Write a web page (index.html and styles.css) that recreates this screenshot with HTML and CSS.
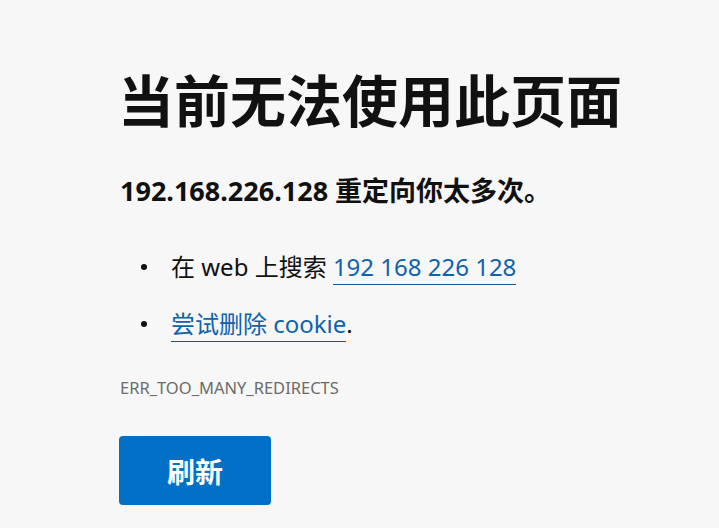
FILE: index.html
```html
<!DOCTYPE html>
<html lang="zh-CN">
<head>
<meta charset="UTF-8">
<title>192.168.226.128</title>
<link rel="stylesheet" href="styles.css">
</head>
<body>
<div class="page">
    <h1 class="title">当前无法使用此页面</h1>
    <p class="summary">192.168.226.128 重定向你太多次。</p>

    <ul class="tips">
        <li>在 web 上搜索 <a href="#">192 168 226 128</a></li>
        <li><a href="#">尝试删除 cookie</a>.</li>
    </ul>

    <div class="error-code">ERR_TOO_MANY_REDIRECTS</div>

    <button class="reload-btn">刷新</button>
</div>
</body>
</html>
```

FILE: styles.css
```css
html, body {
    margin: 0;
    background: #f7f7f7;
}
body {
    font-family: "Noto Sans", "Noto Sans CJK SC", sans-serif;
    color: #111;
}
.page {
    padding: 58px 0 0 118px;
}
.title {
    margin: 0;
    font-family: "Noto Sans CJK SC", sans-serif;
    font-size: 56px;
    font-weight: 700;
    line-height: 80px;
}
.summary {
    margin: 36px 0 0 2px;
    font-size: 27px;
    font-weight: 700;
    line-height: 34px;
}
.tips {
    margin: 30px 0 0;
    padding: 0 0 0 53px;
    list-style: none;
    font-size: 24px;
    line-height: 57px;
}
.tips li {
    position: relative;
}
.tips li::before {
    content: "";
    position: absolute;
    left: -30px;
    top: 26px;
    width: 6px;
    height: 6px;
    border-radius: 50%;
    background: #111;
}
.tips a {
    color: #0f62ad;
    text-decoration: none;
    border-bottom: 1px solid #0f5ba3;
    padding-bottom: 1px;
}
.error-code {
    margin: 26px 0 0 2px;
    font-size: 16.5px;
    color: #6b6b6b;
    line-height: 20px;
}
.reload-btn {
    margin: 38px 0 0 1px;
    width: 152px;
    height: 69px;
    border: none;
    border-radius: 4px;
    background: #0170c6;
    color: #fff;
    font-family: "Noto Sans CJK SC", sans-serif;
    font-size: 28px;
    font-weight: 700;
    cursor: pointer;
}
```
